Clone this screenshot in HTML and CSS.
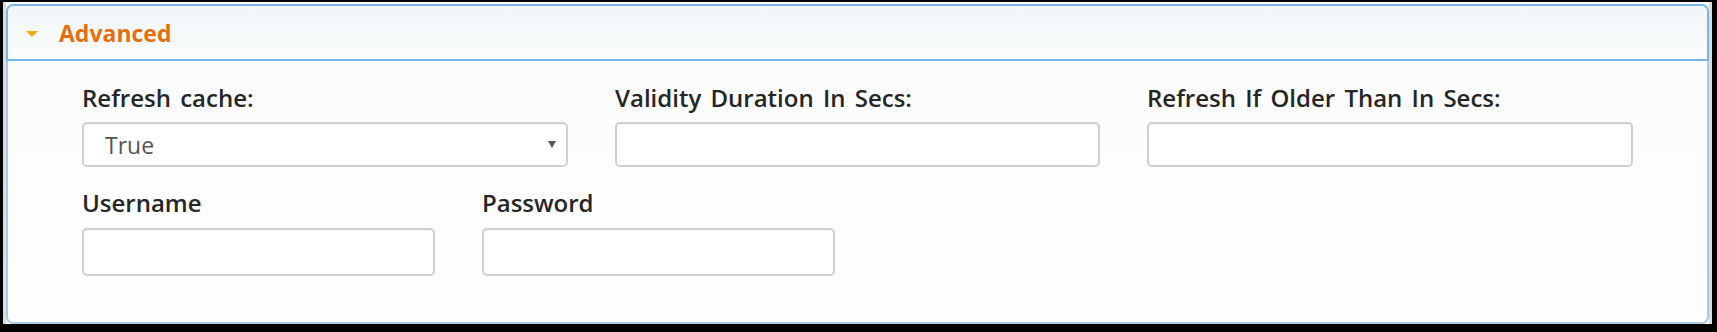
FILE: index.html
```html
<!DOCTYPE html>
<html lang="en">
<head>
    <meta charset="UTF-8">
    <title>Advanced</title>
    <link rel="stylesheet" href="styles.css">
</head>
<body>
    <div class="window">
        <div class="panel">
            <div class="panel-heading">
                <span class="caret"></span>
                <span class="panel-title">Advanced</span>
            </div>
            <div class="panel-body">
                <div class="row row-three">
                    <div class="field">
                        <label for="refreshCache">Refresh cache:</label>
                        <div class="select-wrap">
                            <select id="refreshCache">
                                <option>True</option>
                                <option>False</option>
                            </select>
                        </div>
                    </div>
                    <div class="field">
                        <label for="validity">Validity Duration In Secs:</label>
                        <input type="text" id="validity">
                    </div>
                    <div class="field">
                        <label for="olderThan">Refresh If Older Than In Secs:</label>
                        <input type="text" id="olderThan">
                    </div>
                </div>
                <div class="row row-two">
                    <div class="field">
                        <label for="username">Username</label>
                        <input type="text" id="username" class="tall">
                    </div>
                    <div class="field">
                        <label for="password">Password</label>
                        <input type="password" id="password" class="tall">
                    </div>
                </div>
            </div>
        </div>
    </div>
</body>
</html>
```

FILE: styles.css
```css
html, body {
    height: 100%;
}
body {
    margin: 0;
    padding: 2px 5px 8px 3px;
    box-sizing: border-box;
    background-color: #000;
    font-family: 'Open Sans', 'Liberation Sans', sans-serif;
    color: #262626;
}
.window {
    height: 100%;
    box-sizing: border-box;
    padding: 2px 0 0 0;
    background-color: #fff;
    border-left: 3px solid #dcdcdc;
    border-right: 3px solid #dcdcdc;
}
.panel {
    display: flex;
    flex-direction: column;
}
.panel-heading {
    height: 53px;
    display: flex;
    align-items: center;
    padding-left: 18px;
    border: 2px solid #78b6e8;
    border-radius: 7px 7px 0 0;
    background: linear-gradient(#f2f6f9, #fafcfc);
}
.caret {
    width: 0;
    height: 0;
    border-left: 6px solid transparent;
    border-right: 6px solid transparent;
    border-top: 6px solid #f6a712;
    margin-right: 21px;
    margin-top: 2px;
}
.panel-title {
    font-size: 23px;
    font-weight: 700;
    color: #e2700f;
}
.panel-body {
    height: 263px;
    box-sizing: border-box;
    padding: 23px 0 0 74px;
    border: 2px solid #a9cae2;
    border-top: none;
    border-radius: 0 0 7px 7px;
    background: linear-gradient(#fbfcfc, #fefefe);
}
.row {
    display: grid;
    column-gap: 47px;
}
.row-three {
    grid-template-columns: 486px 485px 486px;
    margin-bottom: 22px;
}
.row-two {
    grid-template-columns: 353px 353px;
}
label {
    display: block;
    font-size: 24px;
    font-weight: 600;
    line-height: 28px;
    word-spacing: 3px;
    margin-bottom: 10px;
}
.row-two label {
    margin-bottom: 11px;
}
input, select {
    display: block;
    width: 100%;
    height: 45px;
    box-sizing: border-box;
    border: 2px solid #d0d0d0;
    border-radius: 5px;
    background-color: #fff;
    font-family: inherit;
    box-shadow: inset 0 1px 1px rgba(0, 0, 0, 0.05);
}
input.tall {
    height: 48px;
}
.select-wrap {
    position: relative;
}
select {
    appearance: none;
    padding-left: 21px;
    font-size: 23px;
    color: #555;
}
.select-wrap::after {
    content: '';
    position: absolute;
    right: 12px;
    top: 19px;
    border-left: 4px solid transparent;
    border-right: 4px solid transparent;
    border-top: 7px solid #555;
    pointer-events: none;
}
```
